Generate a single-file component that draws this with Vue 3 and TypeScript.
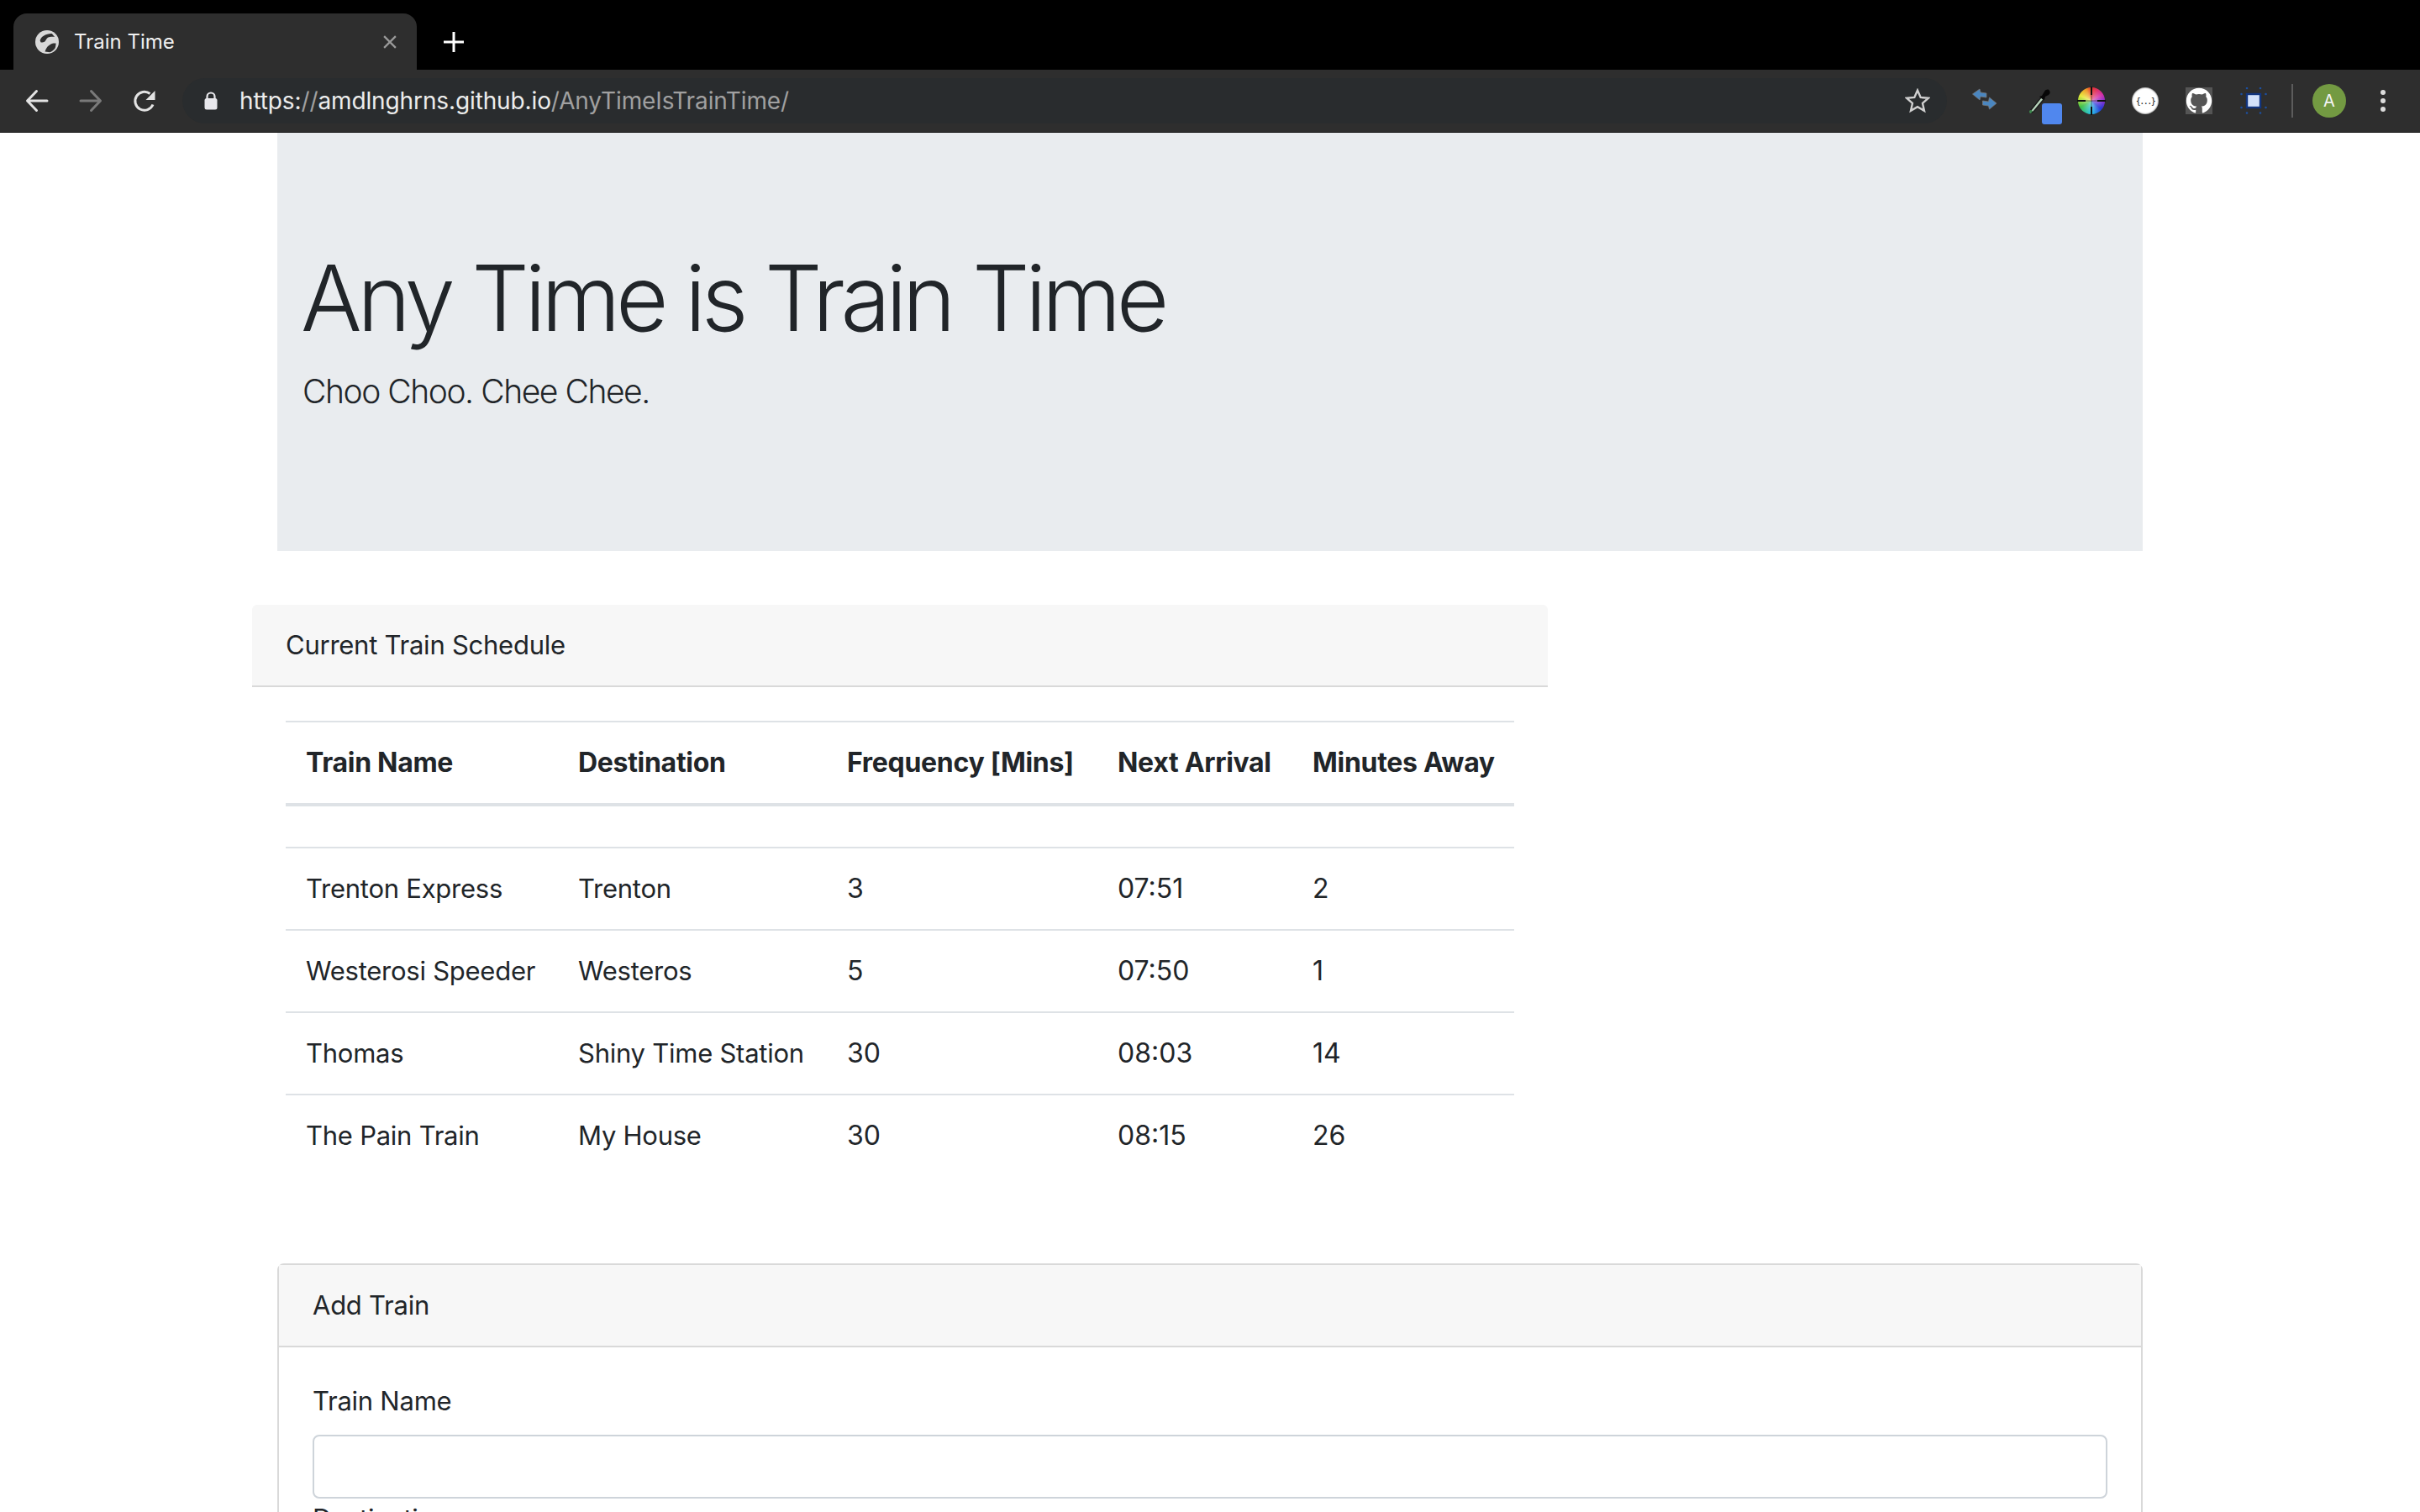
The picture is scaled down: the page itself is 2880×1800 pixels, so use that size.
<script setup lang="ts">
interface Train {
  name: string
  destination: string
  frequency: number
  arrival: string
  away: number
}

const trains: Train[] = [
  { name: 'Trenton Express', destination: 'Trenton', frequency: 3, arrival: '07:51', away: 2 },
  { name: 'Westerosi Speeder', destination: 'Westeros', frequency: 5, arrival: '07:50', away: 1 },
  { name: 'Thomas', destination: 'Shiny Time Station', frequency: 30, arrival: '08:03', away: 14 },
  { name: 'The Pain Train', destination: 'My House', frequency: 30, arrival: '08:15', away: 26 },
]

// little handles round the box extension icon
const handles = [
  [9, 1], [25, 1], [2.5, 8], [31.5, 8], [2.5, 24], [31.5, 24], [9, 30.5], [25, 30.5],
]
</script>

<template>
  <div class="browser">
    <div class="tabstrip">
      <div class="tab">
        <svg class="favicon" viewBox="0 0 16 16" width="28" height="28">
          <circle cx="8" cy="8" r="8" fill="#d8d8d8" />
          <path d="M3.200 7C3.600 5.400 4.400 4.400 5.600 3.800 7.500 2.700 9.700 2.100 11.300 2.300L13.200 4.500C11.500 4.300 9.800 4.400 8.500 5 7.600 5.500 7.400 6.900 6.600 7.500 5.600 8.200 4.700 8.400 3.800 8.300z" fill="#2e2e2e" />
          <path d="M6.600 14.500C7 13 7.800 11.600 8.800 10.700 9.800 9.800 10.900 9.100 12.200 8.800L14 8.800C14 10.200 13.800 11.500 13.200 12.600 12.300 13.700 11.200 14.600 10 15z" fill="#2e2e2e" />
        </svg>
        <span class="tab-title">Train Time</span>
        <svg class="tab-close" viewBox="0 0 16 16" width="20" height="20">
          <path d="M2.500 2.500l11 11M13.500 2.500l-11 11" stroke="#9a9a9a" stroke-width="1.800" fill="none" />
        </svg>
      </div>
      <svg class="new-tab" viewBox="0 0 24 24" width="24" height="24">
        <path d="M12 0v24M0 12h24" stroke="#fff" stroke-width="3" fill="none" />
      </svg>
    </div>
    <div class="toolbar">
      <div class="nav">
        <svg viewBox="0 0 28 28" width="28" height="28"><path d="M26 14H3M13.500 2.500L2.500 14l11 11.500" stroke="#e3e3e3" stroke-width="3" stroke-linecap="round" stroke-linejoin="round" fill="none" /></svg>
        <svg viewBox="0 0 28 28" width="28" height="28"><path d="M2 14h23M14.500 2.500L25.500 14l-11 11.500" stroke="#7a7a7a" stroke-width="3" stroke-linecap="round" stroke-linejoin="round" fill="none" /></svg>
        <svg viewBox="0 0 28 28" width="28" height="28"><path d="M24 18.500A11 11 0 1 1 20.500 5.500" stroke="#e3e3e3" stroke-width="3" fill="none" /><path d="M26.500 2v11h-11z" fill="#e3e3e3" /></svg>
      </div>
      <div class="omnibox">
        <svg class="lock" viewBox="0 0 16 22" width="16" height="22">
          <path d="M3.500 9V6a4.500 4.500 0 0 1 9 0v3" stroke="#e8e8ec" stroke-width="2.200" fill="none" />
          <rect x="0.500" y="8" width="15" height="13.500" rx="2.500" fill="#e8e8ec" />
        </svg>
        <span class="url">https:<span class="url-dim">//</span>amdlnghrns.github.io<span class="url-dim">/AnyTimeIsTrainTime/</span></span>
        <svg class="star" viewBox="0 0 30 30" width="30" height="30">
          <path d="M15 2.500l3.700 8.400 9.100.9-6.800 6.100 2 8.900L15 22.200 7 26.800l2-8.900-6.800-6.100 9.100-.9z" stroke="#d0d0d0" stroke-width="2.400" fill="none" />
        </svg>
      </div>
      <div class="extensions">
        <svg class="ext" viewBox="0 0 32 32" width="32" height="32">
          <path d="M2.500 8l8.500-6 1 4 7 1v5l-7-1-1 4z" fill="#4a86c0" stroke="#777" stroke-width="0.800" />
          <path d="M31 19l-8.500 7-1-4-7-1v-5l7 1 1-5z" fill="#4a86c0" stroke="#777" stroke-width="0.800" />
        </svg>
        <div class="ext ext-dropper">
          <svg viewBox="0 0 32 32" width="32" height="32">
            <path d="M9 30l-1-3 12-15 3 2.500-12 14.500z" fill="#b9d6bd" stroke="#1b1b1b" stroke-width="1.400" />
            <path d="M8 31a2 2 0 0 1 0-4l2 1z" fill="#3d8a4e" />
            <path d="M18 11l3-1 3-5c2-3 5-3 6-1s1 3-1 5l-4 2-1 4z" fill="#070707" />
          </svg>
          <span class="badge"></span>
        </div>
        <div class="ext ext-wheel">
          <span class="wheel-h"></span>
          <span class="wheel-v"></span>
        </div>
        <div class="ext ext-json"><span>{...}</span></div>
        <div class="ext ext-github">
          <svg viewBox="0 0 16 16" width="32" height="32">
            <path fill="#fff" d="M8 .4C3.800.4.400 3.800.400 8c0 3.400 2.200 6.200 5.200 7.200.4.100.5-.2.500-.4v-1.400c-2 .4-2.500-.5-2.600-.9-.1-.2-.5-.9-.8-1.100-.3-.1-.7-.5 0-.5.600 0 1 .6 1.200.8.700 1.200 1.800.8 2.200.6.100-.5.300-.8.500-1-1.700-.2-3.500-.8-3.500-3.700 0-.8.300-1.500.8-2.100-.1-.2-.3-1 .1-2 0 0 .6-.2 2.100.8.600-.2 1.300-.3 1.900-.3s1.300.1 1.900.3c1.500-1 2.100-.8 2.100-.8.400 1 .2 1.800.1 2 .5.600.8 1.200.8 2.100 0 2.900-1.800 3.500-3.500 3.700.3.200.5.700.5 1.400v2.100c0 .2.100.5.500.4 3-1 5.200-3.800 5.200-7.200C15.600 3.800 12.200.4 8 .4z" />
          </svg>
        </div>
        <svg class="ext ext-box" viewBox="0 0 34 32" width="34" height="32">
          <circle v-for="(h, i) in handles" :key="i" :cx="h[0]" :cy="h[1]" r="1.300" fill="#1c4fa0" />
          <rect x="9" y="8" width="16" height="16" fill="#d3e1fb" stroke="#12357f" stroke-width="2.400" />
        </svg>
        <span class="divider"></span>
        <span class="avatar">A</span>
        <div class="menu"><i></i><i></i><i></i></div>
      </div>
    </div>
    <main class="page">
      <div class="container">
        <header class="jumbotron">
          <h1>Any Time is Train Time</h1>
          <p>Choo Choo. Chee Chee.</p>
        </header>
        <section class="schedule">
          <div class="card-header">Current Train Schedule</div>
          <div class="card-body">
            <table>
              <colgroup>
                <col class="c1" /><col class="c2" /><col class="c3" /><col class="c4" /><col class="c5" />
              </colgroup>
              <thead>
                <tr>
                  <th>Train Name</th>
                  <th>Destination</th>
                  <th>Frequency [Mins]</th>
                  <th>Next Arrival</th>
                  <th>Minutes Away</th>
                </tr>
              </thead>
              <tbody>
                <tr class="spacer"><td colspan="5"></td></tr>
                <tr v-for="t in trains" :key="t.name">
                  <td>{{ t.name }}</td>
                  <td>{{ t.destination }}</td>
                  <td class="num">{{ t.frequency }}</td>
                  <td class="num">{{ t.arrival }}</td>
                  <td class="num">{{ t.away }}</td>
                </tr>
              </tbody>
            </table>
          </div>
        </section>
        <section class="add-card">
          <div class="card-header">Add Train</div>
          <form class="add-body">
            <label for="train-name">Train Name</label>
            <input id="train-name" type="text" />
            <label for="train-dest">Destination</label>
            <input id="train-dest" type="text" />
          </form>
        </section>
      </div>
    </main>
  </div>
</template>

<style>
html, body {
  margin: 0;
  height: 100%;
  overflow: hidden;
  background: #fff;
}
</style>

<style scoped>
.browser {
  width: 2880px;
  height: 1800px;
  overflow: hidden;
  display: flex;
  flex-direction: column;
  font-family: Inter, "Liberation Sans", sans-serif;
  color: #212529;
}

.tabstrip {
  height: 83px;
  flex: none;
  background: #000;
  display: flex;
  align-items: flex-end;
  padding-left: 16px;
  box-sizing: border-box;
}

.tab {
  width: 480px;
  height: 67px;
  box-sizing: border-box;
  background: #2e2e2e;
  border-radius: 16px 16px 0 0;
  display: flex;
  align-items: center;
  padding: 0 22px 0 26px;
  color: #f0f0f0;
}

.tab-title {
  margin-left: 18px;
  font-size: 24px;
  flex: 1;
}

.new-tab {
  margin: 0 0 21px 32px;
}

.toolbar {
  height: 75px;
  flex: none;
  background: #2e2e2e;
  display: flex;
  align-items: center;
  border-bottom: 1px solid #111;
  box-sizing: border-box;
}

.nav {
  width: 217px;
  flex: none;
  display: flex;
  gap: 36px;
  padding-left: 30px;
  box-sizing: border-box;
}

.omnibox {
  width: 2100px;
  height: 54px;
  flex: none;
  background: #292c2e;
  border-radius: 27px;
  display: flex;
  align-items: center;
  padding: 0 20px 0 26px;
  box-sizing: border-box;
}

.lock {
  flex: none;
}

.url {
  margin-left: 26px;
  font-size: 28px;
  letter-spacing: -0.120px;
  color: #ececec;
  flex: 1;
}

.url-dim {
  color: #a0a0a0;
}

.extensions {
  flex: 1;
  display: flex;
  align-items: center;
  padding-left: 28px;
}

.ext {
  flex: none;
  width: 32px;
  height: 32px;
  margin-right: 32px;
  position: relative;
}

.ext-dropper svg {
  display: block;
}

.badge {
  position: absolute;
  left: 21px;
  top: 19px;
  width: 24px;
  height: 25px;
  border-radius: 3px;
  background: #5087ee;
}

.ext-wheel {
  border-radius: 50%;
  background:
    radial-gradient(rgba(255, 255, 255, 0.45), transparent 65%),
    conic-gradient(#e8332c, #d42ea8 60deg, #7b2fd0 95deg, #2438d8 130deg, #28c4e8 180deg, #3cc048 240deg, #e8e838 295deg, #f09a28 335deg, #e8332c);
}

.wheel-h, .wheel-v {
  position: absolute;
}

.wheel-h {
  left: -1px;
  right: -1px;
  top: 15px;
  height: 2px;
  background: linear-gradient(90deg, #111 0 28%, rgba(0, 0, 0, 0.25) 28% 72%, #111 72%);
}

.wheel-v {
  top: -1px;
  bottom: -1px;
  left: 15px;
  width: 2px;
  background: linear-gradient(180deg, #111 0 28%, rgba(0, 0, 0, 0.25) 28% 72%, #111 72%);
}

.ext-json {
  border-radius: 50%;
  background: #fff;
  box-shadow: inset 0 0 2px #000;
  color: #111;
  font-family: "DejaVu Sans Mono", monospace;
  font-size: 10px;
  letter-spacing: -1.500px;
  display: flex;
  align-items: center;
  justify-content: center;
}

.ext-github {
  background: #555;
}

.ext-box {
  width: 34px;
  margin-right: 28px;
}

.divider {
  width: 2px;
  height: 40px;
  background: #5c5c5c;
  margin-right: 23px;
}

.avatar {
  width: 40px;
  height: 40px;
  border-radius: 50%;
  background: #739a42;
  color: #f4f4f4;
  font-size: 20px;
  display: flex;
  align-items: center;
  justify-content: center;
}

.menu {
  margin-left: 41px;
  display: flex;
  flex-direction: column;
  gap: 4px;
}

.menu i {
  width: 6px;
  height: 6px;
  border-radius: 50%;
  background: #dcdcdc;
}

.page {
  flex: 1;
  min-height: 0;
  overflow: hidden;
  background: #fff;
}

.container {
  width: 2280px;
  margin: 0 auto;
}

.jumbotron {
  margin: 0 30px 64px;
  padding: 128px 30px;
  background: #e9ecef;
}

.jumbotron h1 {
  margin: 0 0 14px -2px;
  padding-top: 2px;
  font-size: 108px;
  font-weight: 300;
  line-height: 134px;
  letter-spacing: -5.450px;
}

.jumbotron p {
  margin: 0 0 32px;
  font-size: 39px;
  font-weight: 300;
  line-height: 60px;
  letter-spacing: -1.450px;
}

.schedule {
  width: 1542px;
  margin-bottom: 32px;
}

.card-header {
  padding: 24px 40px;
  font-size: 31px;
  letter-spacing: -0.250px;
  line-height: 48px;
  background: #f7f7f7;
  border-bottom: 2px solid #d9d9d9;
}

.schedule .card-header {
  border-radius: 6px 6px 0 0;
}

.card-body {
  padding: 40px;
}

table {
  width: 1462px;
  table-layout: fixed;
  border-collapse: collapse;
  font-size: 31px;
  letter-spacing: -0.250px;
  margin-bottom: 32px;
}

.c1 { width: 324px; }
.c2 { width: 320px; }
.c3 { width: 322px; }
.c4 { width: 232px; }
.c5 { width: 264px; }

th, td {
  padding: 24px;
  line-height: 48px;
  text-align: left;
  white-space: nowrap;
  border-top: 2px solid #dee2e6;
}

th {
  font-size: 32px;
  font-weight: 700;
  letter-spacing: -0.300px;
  border-bottom: 4px solid #dee2e6;
}

td.num {
  font-size: 32px;
  letter-spacing: 0;
}

.spacer td {
  padding: 0;
  height: 48px;
}

.add-card {
  margin: 0 30px;
  border: 2px solid #d9d9d9;
  border-radius: 8px 8px 0 0;
}

.add-body {
  padding: 40px;
  display: flex;
  flex-direction: column;
  font-size: 31px;
  letter-spacing: -0.250px;
}

label {
  line-height: 48px;
  margin-bottom: 16px;
}

input {
  height: 76px;
  flex: none;
  box-sizing: border-box;
  border: 2px solid #ced4da;
  border-radius: 8px;
  background: #fff;
}
</style>
